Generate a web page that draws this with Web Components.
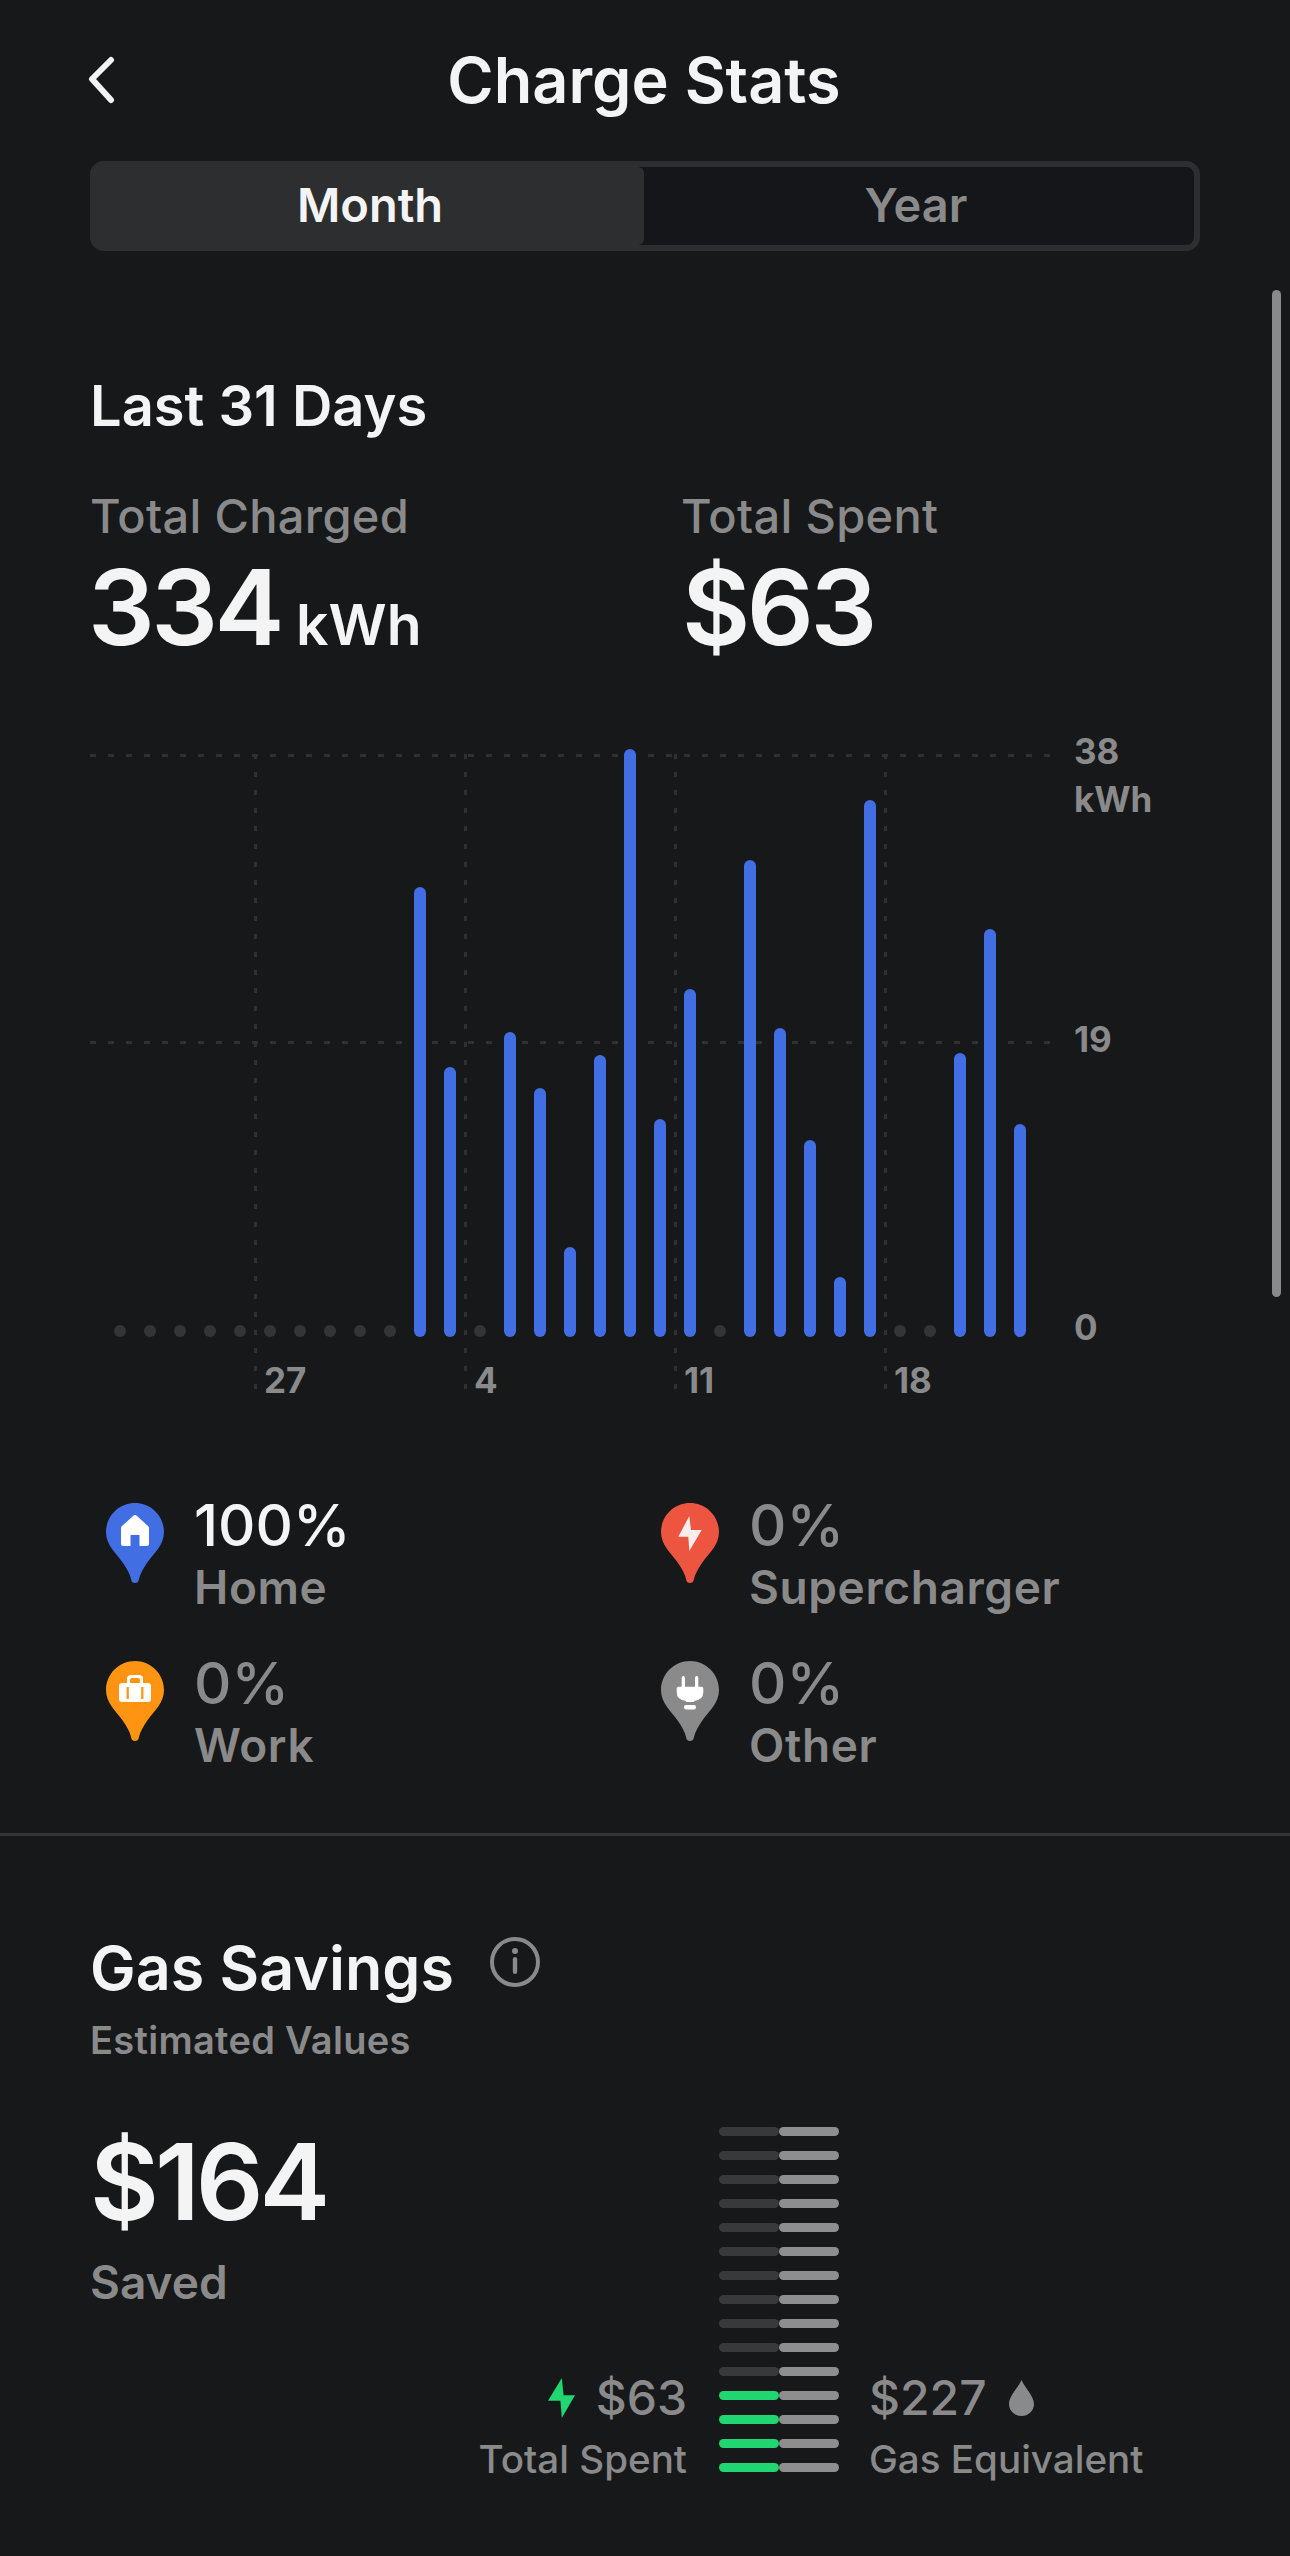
<!doctype html>
<html lang="en">
<head>
<meta charset="utf-8">
<title>Charge Stats</title>
<style>
  html, body { margin: 0; background: #16181a; }
  body { font-family: Inter, "Noto Sans", sans-serif; color: #f4f4f5; }
</style>
</head>
<body>
<stats-screen>
  <nav-header>Charge Stats</nav-header>
  <segment-control first="Month" second="Year"></segment-control>
  <section-title>Last 31 Days</section-title>
  <stat-row>
    <stat-block label="Total Charged" value="334" unit="kWh"></stat-block>
    <stat-block label="Total Spent" value="$63"></stat-block>
  </stat-row>
  <bar-chart></bar-chart>
  <source-legend>
    <source-item kind="home" value="100%" active>Home</source-item>
    <source-item kind="super" value="0%">Supercharger</source-item>
    <source-item kind="work" value="0%">Work</source-item>
    <source-item kind="other" value="0%">Other</source-item>
  </source-legend>
  <gas-savings></gas-savings>
</stats-screen>

<script>
class StatsScreen extends HTMLElement {
  connectedCallback() {
    const shadow = this.attachShadow({ mode: "open" });
    shadow.innerHTML = `
      <style>
        :host {
          display: block;
          position: relative;
          width: 1290px;
          height: 2556px;
          overflow: hidden;
          background: #16181a;
          font-family: Inter, "Noto Sans", sans-serif;
        }
        .scrollbar {
          position: absolute;
          left: 1272px;
          top: 290px;
          width: 9px;
          height: 1007px;
          border-radius: 5px;
          background: #8a8a8a;
        }
      </style>
      <slot></slot>
      <div class="scrollbar"></div>
    `;
  }
}

class NavHeader extends HTMLElement {
  connectedCallback() {
    const shadow = this.attachShadow({ mode: "open" });
    shadow.innerHTML = `
      <style>
        :host {
          display: grid;
          grid-template-columns: 90px 1fr 90px;
          align-items: center;
          height: 161px;
          font-size: 63px;
          font-weight: 600;
          color: #f4f4f5;
        }
        svg { display: block; margin-left: 86px; }
        h1 { margin: 0; font: inherit; text-align: center; line-height: 161px; margin-left: -2px; }
      </style>
      <svg width="34" height="50" viewBox="0 0 34 50">
        <polyline points="25,4 6,23 25,44" fill="none" stroke="#f4f4f5" stroke-width="6" stroke-linecap="round" stroke-linejoin="round"/>
      </svg>
      <h1><slot></slot></h1>
    `;
  }
}

class SegmentControl extends HTMLElement {
  connectedCallback() {
    const shadow = this.attachShadow({ mode: "open" });
    shadow.innerHTML = `
      <style>
        :host {
          display: flex;
          box-sizing: border-box;
          width: 1110px;
          height: 90px;
          margin-left: 90px;
          border: 6px solid #2d2e30;
          border-radius: 14px;
          background: #141619;
          font-size: 47px;
          font-weight: 600;
          text-align: center;
          line-height: 76px;
        }
        div { flex: 1; }
        .on { flex: 0 0 548px; background: #2d2e30; color: #f4f4f5; border-radius: 0 6px 6px 0; }
        .off { color: #8a8a8a; padding-right: 6px; }
      </style>
      <div class="on">${this.getAttribute("first")}</div>
      <div class="off">${this.getAttribute("second")}</div>
    `;
  }
}

class SectionTitle extends HTMLElement {
  connectedCallback() {
    const shadow = this.attachShadow({ mode: "open" });
    shadow.innerHTML = `
      <style>
        :host {
          display: block;
          margin: 125px 0 0 90px;
          font-size: 56px;
          font-weight: 600;
          line-height: 60px;
          color: #f4f4f5;
        }
      </style>
      <slot></slot>
    `;
  }
}

class StatRow extends HTMLElement {
  connectedCallback() {
    const shadow = this.attachShadow({ mode: "open" });
    shadow.innerHTML = `
      <style>
        :host {
          display: grid;
          grid-template-columns: 591px 1fr;
          margin: 52px 0 0 90px;
        }
      </style>
      <slot></slot>
    `;
  }
}

class StatBlock extends HTMLElement {
  connectedCallback() {
    const shadow = this.attachShadow({ mode: "open" });
    const unit = this.getAttribute("unit");
    shadow.innerHTML = `
      <style>
        :host { display: block; }
        .label { font-size: 47px; font-weight: 500; line-height: 56px; color: #8a8a8a; letter-spacing: 0.3px; }
        .value { height: 110px; margin-top: 8px; margin-left: ${unit ? -2 : 1}px; font-size: 105px; font-weight: 600; line-height: 110px; letter-spacing: -3.5px; color: #f4f4f5; }
        .unit { font-size: 57px; margin-left: 15px; letter-spacing: 0; }
      </style>
      <div class="label">${this.getAttribute("label")}</div>
      <div class="value">${this.getAttribute("value")}${unit ? `<span class="unit">${unit}</span>` : ""}</div>
    `;
  }
}

class BarChart extends HTMLElement {
  connectedCallback() {
    const shadow = this.attachShadow({ mode: "open" });
    // bar heights in px per day, 0 draws the idle dot
    const days = [0,0,0,0,0,0,0,0,0,0,450,270,0,305,249,90,282,588,218,348,0,477,309,197,60,537,0,0,284,408,213];
    const bars = days.map((h) =>
      h ? `<i class="bar" style="height:${h}px"></i>` : `<i class="dot"></i>`
    ).join("");
    const ticks = [["27", 165], ["4", 375], ["11", 585], ["18", 795]].map(([t, x]) =>
      `<span class="vline" style="left:${x - 1}px"></span><span class="tick" style="left:${x + 9}px">${t}</span>`
    ).join("");
    shadow.innerHTML = `
      <style>
        :host {
          display: block;
          position: relative;
          width: 1110px;
          height: 660px;
          margin: 78px 0 0 90px;
        }
        .bars {
          display: grid;
          grid-template-columns: repeat(31, 30px);
          align-items: end;
          justify-items: center;
          height: 597px;
          padding-left: 15px;
          position: relative;
        }
        .bar { width: 12px; border-radius: 6px; background: #416ee3; }
        .dot { width: 12px; height: 12px; border-radius: 50%; background: #333537; }
        .hline {
          position: absolute;
          left: 0;
          width: 960px;
          height: 3px;
          background: repeating-linear-gradient(90deg, #2e3033 0 6px, transparent 6px 18px);
        }
        .vline {
          position: absolute;
          top: 14px;
          width: 3px;
          height: 636px;
          background: repeating-linear-gradient(180deg, #2e3033 0 5px, transparent 5px 18px);
        }
        .tick, .axis {
          position: absolute;
          font-size: 35px;
          font-weight: 700;
          line-height: 40px;
          color: #8a8a8a;
        }
        .tick { top: 620px; }
        .axis { left: 984px; }
      </style>
      <span class="hline" style="top:14px"></span>
      <span class="hline" style="top:301px"></span>
      ${ticks}
      <div class="bars">${bars}</div>
      <span class="axis" style="top:-9px">38</span>
      <span class="axis" style="top:39px">kWh</span>
      <span class="axis" style="top:279px">19</span>
      <span class="axis" style="top:567px">0</span>
    `;
  }
}

class SourceLegend extends HTMLElement {
  connectedCallback() {
    const shadow = this.attachShadow({ mode: "open" });
    shadow.innerHTML = `
      <style>
        :host {
          display: grid;
          grid-template-columns: 555px 1fr;
          grid-auto-rows: 158px;
          box-sizing: border-box;
          height: 341px;
          margin-top: 95px;
          padding-left: 106px;
          border-bottom: 3px solid #333538;
        }
      </style>
      <slot></slot>
    `;
  }
}

const PIN_GLYPHS = {
  home: { fill: "#416ee3", glyph: `<path d="M29 12 Q30 12 31 13 L42 23 Q43 24 43 25 V41 Q43 43 41 43 H33.5 V32 H24.5 V43 H17 Q15 43 15 41 V25 Q15 24 16 23 L27 13 Q28 12 29 12Z" fill="#fff"/>` },
  super: { fill: "#ee5541", glyph: `<path d="M28.3 13 L17.3 33.7 H27.3 L28.3 48 L40.7 27 H30 Z" fill="#fdeeec"/>` },
  work: { fill: "#ff9312", glyph: `<path fill-rule="evenodd" d="M21 22 V18 Q21 14 25 14 H33 Q37 14 37 18 V22 H42 Q45 22 45 25 V38 Q45 41 42 41 H16 Q13 41 13 38 V25 Q13 22 16 22Z M24 22 H34 V19 Q34 17 32 17 H26 Q24 17 24 19Z" fill="#fff"/><path d="M21.7 26 V38 M36.3 26 V38" stroke="#ff9312" stroke-width="2.2"/>` },
  other: { fill: "#8a8a8a", glyph: `<path d="M20.7 17 Q20.7 15 22.3 15 Q24 15 24 17 V25.7 H34 V17 Q34 15 35.7 15 Q37.3 15 37.3 17 V25.7 H40.5 Q42.3 25.7 42.3 27.5 V31 Q42.3 39 33 40 V41 H25 V40 Q15.7 39 15.7 31 V27.5 Q15.7 25.7 17.5 25.7 H20.7Z" fill="#fff"/><rect x="23" y="44" width="12" height="4.4" rx="2" fill="#fff"/>` },
};

class SourceItem extends HTMLElement {
  connectedCallback() {
    const shadow = this.attachShadow({ mode: "open" });
    const { fill, glyph } = PIN_GLYPHS[this.getAttribute("kind")];
    shadow.innerHTML = `
      <style>
        :host { display: flex; gap: 30px; align-items: flex-start; }
        svg { display: block; margin-top: 8px; flex: none; }
        .value { font-size: 58px; font-weight: 500; line-height: 60px; color: ${this.hasAttribute("active") ? "#f4f4f5" : "#8a8a8a"}; }
        .name { margin-top: 2px; font-size: 46px; font-weight: 600; line-height: 60px; color: #8a8a8a; letter-spacing: 0.6px; }
      </style>
      <svg width="58" height="80" viewBox="0 0 58 80">
        <path d="M29 0 C45 0 58 13 58 29 C58 42 48 50 41 60 C37 66 34 71 33 76 C32.5 79 31 80 29 80 C27 80 25.5 79 25 76 C24 71 21 66 17 60 C10 50 0 42 0 29 C0 13 13 0 29 0Z" fill="${fill}"/>
        ${glyph}
      </svg>
      <div>
        <div class="value">${this.getAttribute("value")}</div>
        <div class="name"><slot></slot></div>
      </div>
    `;
  }
}

class BarLadder extends HTMLElement {
  connectedCallback() {
    const shadow = this.attachShadow({ mode: "open" });
    const rows = Array.from({ length: 15 }, (_, i) =>
      `<div class="row"><i class="${i > 10 ? "green" : "dim"}"></i><i class="grey"></i></div>`
    ).join("");
    shadow.innerHTML = `
      <style>
        :host { display: flex; flex-direction: column; gap: 15px; width: 120px; flex: none; margin-left: -1px; }
        .row { display: flex; height: 9px; }
        i { flex: 1; border-radius: 5px; }
        .dim { background: #37393b; }
        .grey { background: #8e8e8e; }
        .green { background: #1fd671; }
      </style>
      ${rows}
    `;
  }
}

class GasSavings extends HTMLElement {
  connectedCallback() {
    const shadow = this.attachShadow({ mode: "open" });
    shadow.innerHTML = `
      <style>
        :host {
          display: block;
          padding: 97px 0 0 90px;
          font-weight: 500;
          color: #8a8a8a;
        }
        .head { display: flex; align-items: center; gap: 36px; }
        h2 { margin: 0; font-size: 61px; font-weight: 600; line-height: 70px; color: #f4f4f5; }
        .info { display: block; margin-top: -12px; }
        .sub { margin-top: 14px; font-size: 38px; font-weight: 600; line-height: 46px; letter-spacing: 0.3px; }
        .body { display: flex; margin-top: 64px; }
        .saved { width: 376px; flex: none; }
        .big { font-size: 106px; font-weight: 600; letter-spacing: -4px; line-height: 110px; color: #f4f4f5; }
        .saved-label { margin-top: 15px; font-size: 46px; font-weight: 600; line-height: 60px; }
        .compare { margin-top: 246px; }
        .spent { width: 221px; margin-right: 33px; flex: none; text-align: right; }
        .gas { margin-left: 30px; }
        .amount { display: flex; align-items: center; gap: 22px; height: 50px; font-size: 48px; line-height: 50px; }
        .spent .amount { justify-content: flex-end; gap: 20px; }
        .caption { margin-top: 13px; font-size: 38.6px; line-height: 46px; white-space: nowrap; }
      </style>
      <div class="head">
        <h2>Gas Savings</h2>
        <svg class="info" width="50" height="50" viewBox="0 0 50 50">
          <circle cx="25" cy="25" r="23" fill="none" stroke="#8a8a8a" stroke-width="4"/>
          <circle cx="25" cy="14" r="3" fill="#8a8a8a"/>
          <rect x="22.8" y="20" width="4.4" height="17" rx="2.2" fill="#8a8a8a"/>
        </svg>
      </div>
      <div class="sub">Estimated Values</div>
      <div class="body">
        <div class="saved">
          <div class="big">$164</div>
          <div class="saved-label">Saved</div>
        </div>
        <div class="compare spent">
          <div class="amount">
            <svg width="28" height="40" viewBox="0 0 28 40"><path d="M13.8 0 L0 22.7 H12.4 L13.8 40 L27 17.3 H15.6Z" fill="#1fd671"/></svg>
            <span>$63</span>
          </div>
          <div class="caption">Total Spent</div>
        </div>
        <bar-ladder></bar-ladder>
        <div class="compare gas">
          <div class="amount">
            <span>$227</span>
            <svg width="25" height="36" viewBox="0 0 25 36"><path d="M12.5 0 C16 8 25 16 25 24 A12.5 12 0 0 1 0 24 C0 16 9 8 12.5 0Z" fill="#8a8a8a"/></svg>
          </div>
          <div class="caption">Gas Equivalent</div>
        </div>
      </div>
    `;
  }
}

customElements.define("stats-screen", StatsScreen);
customElements.define("nav-header", NavHeader);
customElements.define("segment-control", SegmentControl);
customElements.define("section-title", SectionTitle);
customElements.define("stat-row", StatRow);
customElements.define("stat-block", StatBlock);
customElements.define("bar-chart", BarChart);
customElements.define("source-legend", SourceLegend);
customElements.define("source-item", SourceItem);
customElements.define("bar-ladder", BarLadder);
customElements.define("gas-savings", GasSavings);
</script>
</body>
</html>
